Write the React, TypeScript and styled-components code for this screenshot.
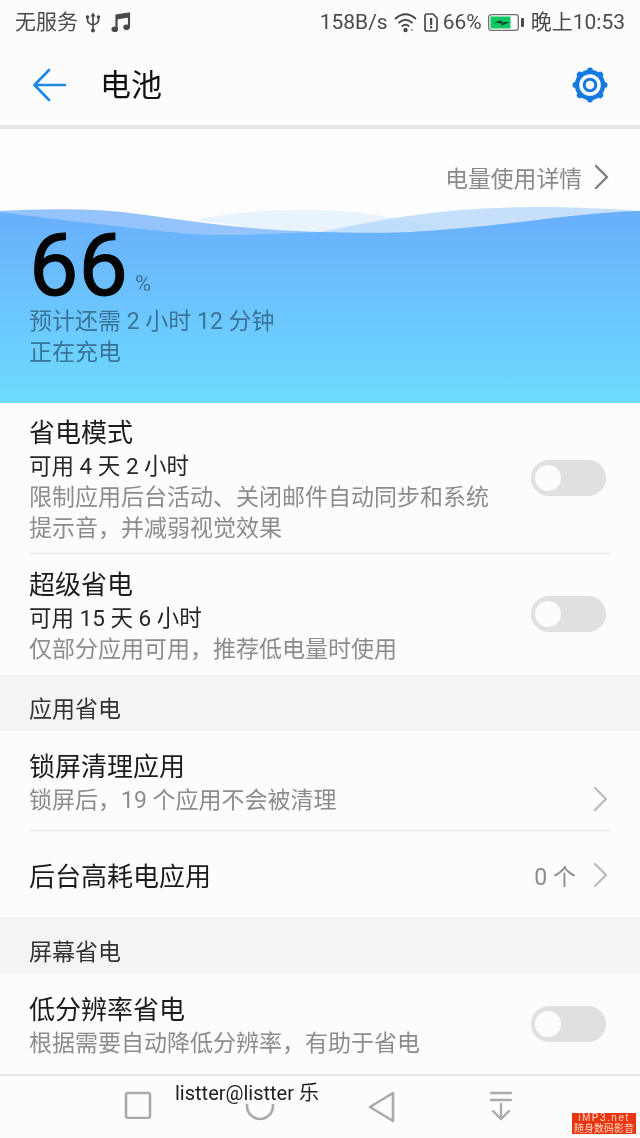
import React from "react";
import styled, { createGlobalStyle } from "styled-components";

const Global = createGlobalStyle`
  html, body { margin: 0; padding: 0; background: #fcfcfc; }
  body { font-family: Roboto, "Noto Sans CJK SC", sans-serif; }
  * { box-sizing: border-box; }
`;

const Page = styled.div`
  position: relative;
  width: 640px;
  height: 1138px;
  overflow: hidden;
  background: #fcfcfc;
  display: flex;
  flex-direction: column;
  filter: blur(0.35px);
`;

const StatusBar = styled.div`
  height: 45px;
  padding: 0 15px 1px;
  display: flex;
  align-items: center;
  justify-content: space-between;
  color: #4a4a4a;
  font-size: 21px;
  line-height: 24px;
`;

const StatusGroup = styled.div<{ $gap: number }>`
  display: flex;
  align-items: center;
  gap: ${(p) => p.$gap}px;
  white-space: nowrap;
`;

const Nudge = styled.span<{ $left: number }>`
  display: flex;
  align-items: center;
  margin-left: ${(p) => p.$left}px;
`;

const Header = styled.div`
  height: 80px;
  display: flex;
  align-items: center;
  padding: 0 32px 0 33px;
`;

const HeaderTitle = styled.div`
  font-size: 31px;
  line-height: 40px;
  color: #111;
  margin-left: 33px;
  padding-top: 2px;
  flex: 1;
`;

const HeaderRule = styled.div`
  height: 4px;
  background: #e6e6e6;
`;

const Hero = styled.div`
  position: relative;
  height: 274px;
  background: #fdfdfd;
  display: flex;
  flex-direction: column;
`;

const DetailLink = styled.div`
  display: flex;
  align-items: center;
  justify-content: flex-end;
  gap: 12px;
  height: 52px;
  margin-top: 22px;
  padding-right: 31px;
  font-size: 22.8px;
  color: #888;
`;

const Water = styled.svg`
  position: absolute;
  left: 0;
  top: 76px;
`;

const HeroText = styled.div`
  position: relative;
  padding: 22px 0 0 29px;
`;

const Level = styled.div`
  display: flex;
  align-items: baseline;
  height: 80px;
`;

const LevelNumber = styled.span`
  font-size: 88px;
  line-height: 80px;
  font-weight: 400;
  color: #050505;
  font-family: Roboto, sans-serif;
  -webkit-text-stroke: 1px #050505;
`;

const LevelUnit = styled.span`
  font-size: 22px;
  margin-left: 7px;
  color: #3f7196;
  transform: translateY(-4px);
`;

const HeroLine = styled.div<{ $top: number }>`
  font-size: 23px;
  line-height: 33px;
  color: #3a7397;
  margin-top: ${(p) => p.$top}px;
`;

const Row = styled.div<{ $h: number; $pt: number }>`
  position: relative;
  height: ${(p) => p.$h}px;
  padding: ${(p) => p.$pt}px 29px 0;
  display: flex;
  justify-content: space-between;
`;

const CenterRow = styled(Row)`
  align-items: center;
`;

const RowRule = styled.div`
  height: 1px;
  margin: 0 29px;
  background: #e3e3e3;
`;

const RowText = styled.div`
  width: 480px;
`;

const RowTitle = styled.div`
  font-size: 26px;
  line-height: 36px;
  color: #1c1c1c;
`;

const RowStrong = styled.div`
  font-size: 22.5px;
  line-height: 31px;
  color: #262626;
`;

const RowNote = styled.div`
  font-size: 23px;
  line-height: 31px;
  color: #8c8c8c;
`;

const SectionHead = styled.div<{ $h: number }>`
  background: #f4f4f4;
  height: ${(p) => p.$h}px;
  padding: 0 29px 5px;
  display: flex;
  align-items: flex-end;
  font-size: 23px;
  line-height: 32px;
  color: #333;
`;

const Toggle = styled.div<{ $top: number }>`
  position: absolute;
  right: 34px;
  width: 75px;
  height: 36px;
  border-radius: 18px;
  background: #e0e0e0;
  top: ${(p) => p.$top}px;
  &::after {
    content: "";
    position: absolute;
    left: 3.5px;
    top: 4.5px;
    width: 26px;
    height: 26px;
    border-radius: 50%;
    background: #fcfcfc;
  }
`;

const Trail = styled.div<{ $top?: number; $bottom?: number }>`
  display: flex;
  align-items: center;
  gap: 17px;
  margin: ${(p) => p.$top ?? 0}px 3px ${(p) => p.$bottom ?? 0}px 0;
  font-size: 23px;
  color: #8c8c8c;
`;

const NavBar = styled.div`
  border-top: 2px solid #e6e6e6;
  flex: 1;
  padding: 15px 127px 0 124px;
  display: flex;
  justify-content: space-between;
  align-items: flex-start;
`;

const Watermark = styled.div`
  position: absolute;
  left: 175px;
  top: 1083px;
  height: 21px;
  padding-right: 2px;
  font-size: 20px;
  line-height: 21px;
  color: #222;
  background: #fcfcfc;
  white-space: nowrap;
`;

const Badge = styled.div`
  position: absolute;
  left: 572px;
  top: 1113px;
  width: 64px;
  height: 21px;
  background: #e8340f;
  color: #ffd9c9;
  font-size: 10px;
  line-height: 10.5px;
  text-align: center;
  font-family: "Liberation Sans", "Noto Sans CJK SC", sans-serif;
`;

const BadgeTop = styled.div`
  letter-spacing: 1.5px;
`;

const Chevron = ({ c = "#bcbcbc", w = 2.4 }: { c?: string; w?: number }) => (
  <svg width="15" height="26" viewBox="0 0 15 26" fill="none">
    <path d="M2 2 L13 13 L2 24" stroke={c} strokeWidth={w} strokeLinecap="round" strokeLinejoin="round" />
  </svg>
);

const Gear = () => {
  const teeth = [0, 45, 90, 135, 180, 225, 270, 315];
  return (
    <svg width="36" height="36" viewBox="0 0 36 36" fill="none">
      <circle cx="18" cy="18" r="13" stroke="#1479e0" strokeWidth="4.4" />
      <circle cx="18" cy="18" r="5.8" stroke="#1479e0" strokeWidth="3" />
      {teeth.map((a) => (
        <circle key={a} cx="18" cy="3.4" r="2.9" fill="#1479e0" transform={`rotate(${a} 18 18)`} />
      ))}
    </svg>
  );
};

export default function App() {
  return (
    <Page>
      <Global />
      <StatusBar>
        <StatusGroup $gap={7}>
          <span>无服务</span>
          <svg width="16" height="21" viewBox="0 0 16 21" fill="none">
            <path d="M8 2 V18 M2.5 5 V8 Q2.5 11.5 8 13 Q13.5 11.5 13.5 8 V5" stroke="#4a4a4a" strokeWidth="1.7" />
            <path d="M8 0.5 L10.5 4.5 H5.5 Z" fill="#4a4a4a" />
            <circle cx="8" cy="18.5" r="2" fill="#4a4a4a" />
            <circle cx="2.5" cy="5" r="1.8" fill="#4a4a4a" />
            <circle cx="13.5" cy="5" r="1.8" fill="#4a4a4a" />
          </svg>
          <Nudge $left={3}>
            <svg width="20" height="21" viewBox="0 0 20 21" fill="none">
              <path d="M5.5 17 V3.5 L18 1.5 V15" stroke="#4a4a4a" strokeWidth="2.2" />
              <path d="M5.5 3.5 L18 1.5 V5.5 L5.5 7.5 Z" fill="#4a4a4a" />
              <ellipse cx="3.8" cy="17.2" rx="3.3" ry="2.8" fill="#4a4a4a" />
              <ellipse cx="15.6" cy="15.2" rx="3.3" ry="2.8" fill="#4a4a4a" />
            </svg>
          </Nudge>
        </StatusGroup>
        <StatusGroup $gap={6}>
          <span>158B/s</span>
          <svg width="24" height="21" viewBox="0 0 24 21" fill="none">
            <path d="M1 7 Q11.5 -2.5 22 7 M4.5 11 Q11.5 4.5 18.5 11 M7.8 14.5 Q11.5 11 15.2 14.5" stroke="#4a4a4a" strokeWidth="2" fill="none" />
            <circle cx="11.5" cy="18" r="2.2" fill="#4a4a4a" />
            <circle cx="18" cy="18" r="1.1" fill="#999" />
          </svg>
          <svg width="14" height="19" viewBox="0 0 14 19" fill="none">
            <path d="M1 3 Q1 1 3 1 H9 L13 5 V16 Q13 18 11 18 H3 Q1 18 1 16 Z" stroke="#4a4a4a" strokeWidth="1.7" />
            <rect x="6" y="5" width="2.2" height="7" fill="#4a4a4a" />
            <rect x="6" y="13" width="2.2" height="2.4" fill="#4a4a4a" />
          </svg>
          <Nudge $left={-1}>66%</Nudge>
          <svg width="36" height="17" viewBox="0 0 36 17" fill="none">
            <rect x="0.7" y="0.7" width="29.6" height="15.6" rx="2.5" stroke="#6f6f6f" strokeWidth="1.3" />
            <rect x="2.5" y="2.5" width="20" height="12" fill="#0fc862" />
            <path d="M6 8.5 L14 6 L13.5 8 L22 8 L13 12 L13.8 9.6 Z" fill="#0b4d2a" />
            <rect x="33" y="4" width="3" height="9" rx="1" fill="#4a4a4a" />
          </svg>
          <Nudge $left={1}>晚上10:53</Nudge>
        </StatusGroup>
      </StatusBar>
      <Header>
        <svg width="34" height="34" viewBox="0 0 34 34" fill="none">
          <path d="M32 17 H2 M16 2 L1.5 17 L16 32" stroke="#1e88e5" strokeWidth="2.6" strokeLinecap="round" strokeLinejoin="round" />
        </svg>
        <HeaderTitle>电池</HeaderTitle>
        <Gear />
      </Header>
      <HeaderRule />
      <Hero>
        <Water width="640" height="198" viewBox="0 205 640 198">
          <defs>
            <linearGradient id="sea" x1="0" y1="0" x2="0" y2="1">
              <stop offset="0" stopColor="#69aefc" />
              <stop offset="1" stopColor="#6ddcff" />
            </linearGradient>
          </defs>
          <path d="M195 220 C230 213 270 209 320 210 C360 211 400 218 445 228 L320 236 Z" fill="#e8f3fe" />
          <path d="M0 211 C40 209 90 208 130 213 C180 219 240 230 320 232 L240 238 L0 240 Z" fill="#94c4fb" />
          <path d="M320 232 C360 224 410 214 460 210 C500 207 560 205 640 211 V240 H320 Z" fill="#a9d1fa" fillOpacity="0.65" />
          <path d="M0 212 C60 220 130 228 190 234 C230 237 280 233 320 232 C350 233 390 233 410 232 C450 230 500 225 553 218 C590 214 620 211 640 211 V403 H0 Z" fill="url(#sea)" />
        </Water>
        <DetailLink>
          <span>电量使用详情</span>
          <Chevron c="#7f7f7f" />
        </DetailLink>
        <HeroText>
          <Level>
            <LevelNumber>66</LevelNumber>
            <LevelUnit>%</LevelUnit>
          </Level>
          <HeroLine $top={0}>预计还需 2 小时 12 分钟</HeroLine>
          <HeroLine $top={-2}>正在充电</HeroLine>
        </HeroText>
      </Hero>
      <Row $h={150} $pt={12}>
        <RowText>
          <RowTitle>省电模式</RowTitle>
          <RowStrong>可用 4 天 2 小时</RowStrong>
          <RowNote>限制应用后台活动、关闭邮件自动同步和系统提示音，并减弱视觉效果</RowNote>
        </RowText>
        <Toggle $top={57} />
      </Row>
      <RowRule />
      <Row $h={121} $pt={13}>
        <RowText>
          <RowTitle>超级省电</RowTitle>
          <RowStrong>可用 15 天 6 小时</RowStrong>
          <RowNote>仅部分应用可用，推荐低电量时使用</RowNote>
        </RowText>
        <Toggle $top={42} />
      </Row>
      <SectionHead $h={56}>应用省电</SectionHead>
      <Row $h={99} $pt={18}>
        <RowText>
          <RowTitle>锁屏清理应用</RowTitle>
          <RowNote>锁屏后，19 个应用不会被清理</RowNote>
        </RowText>
        <Trail $top={18}>
          <Chevron />
        </Trail>
      </Row>
      <RowRule />
      <CenterRow $h={86} $pt={6}>
        <RowTitle>后台高耗电应用</RowTitle>
        <Trail $bottom={5}>
          <span>0 个</span>
          <Chevron />
        </Trail>
      </CenterRow>
      <SectionHead $h={57}>屏幕省电</SectionHead>
      <Row $h={100} $pt={18}>
        <RowText>
          <RowTitle>低分辨率省电</RowTitle>
          <RowNote>根据需要自动降低分辨率，有助于省电</RowNote>
        </RowText>
        <Toggle $top={32} />
      </Row>
      <NavBar>
        <svg width="28" height="28" viewBox="0 0 28 28" fill="none">
          <rect x="2" y="2" width="24" height="25" rx="2" stroke="#aaa" strokeWidth="2.6" />
        </svg>
        <svg width="30" height="30" viewBox="0 0 30 30" fill="none">
          <circle cx="15" cy="15" r="13" stroke="#aaa" strokeWidth="2.6" />
        </svg>
        <svg width="28" height="32" viewBox="0 0 28 32" fill="none">
          <path d="M25 2 V30 L2 16 Z" stroke="#aaa" strokeWidth="2.6" strokeLinejoin="round" />
        </svg>
        <svg width="24" height="30" viewBox="0 0 24 30" fill="none">
          <path d="M2 2 H22 M2 9 H22 M12 13 V27 M4 20 L12 28 L20 20" stroke="#aaa" strokeWidth="2.4" strokeLinecap="round" />
        </svg>
      </NavBar>
      <Watermark>listter@listter 乐</Watermark>
      <Badge>
        <BadgeTop>iMP3.net</BadgeTop>
        <div>随身数码影音</div>
      </Badge>
    </Page>
  );
}
